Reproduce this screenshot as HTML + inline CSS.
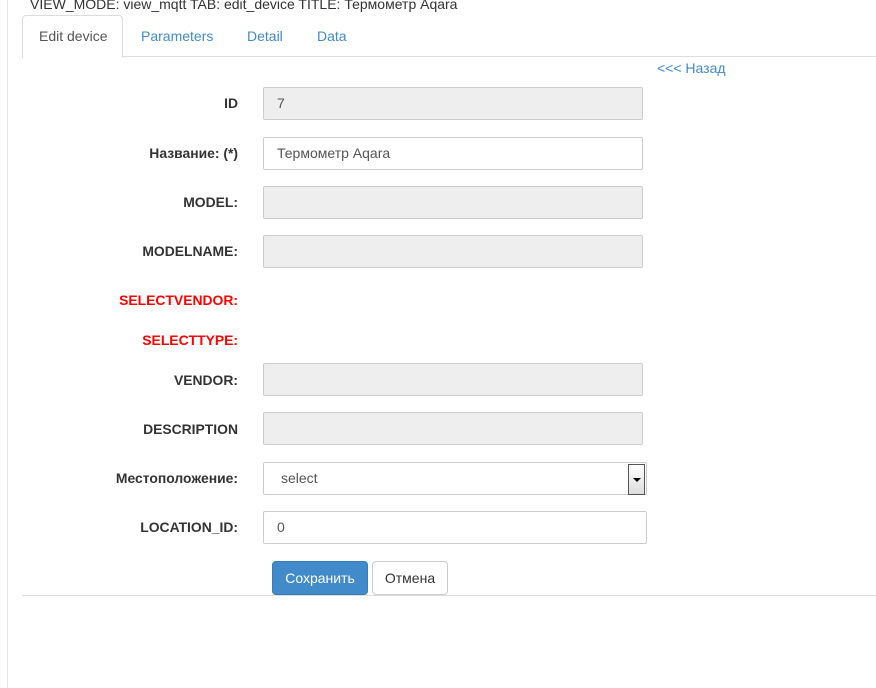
<!DOCTYPE html><html><head><meta charset="utf-8"><style>
body{margin:0;width:876px;height:688px;background:#fff;font-family:"Liberation Sans",sans-serif;font-size:14px;color:#333;position:relative;overflow:hidden}
.a{position:absolute}
.vl{left:7px;top:0;width:1px;height:688px;background:#e5e5e5}
.lab{right:638px;font-weight:bold;font-size:13.9px;text-align:right;white-space:nowrap}
.inp{left:263px;width:378px;height:31px;border:1px solid #ccc;border-radius:2px;background:#eee;box-sizing:content-box}
.inp span{position:absolute;left:13px;top:7px;font-size:14px;color:#555}
</style></head><body>
<div class="a vl"></div>
<div class="a" style="left:30px;top:-4px;font-size:14px;color:#333">VIEW_MODE: view_mqtt TAB: edit_device TITLE: Термометр Aqara</div>
<div class="a" style="left:22px;top:56px;width:854px;height:1px;background:#ddd"></div>
<div class="a" style="left:22px;top:15px;width:99px;height:42px;border:1px solid #ddd;border-bottom:none;border-radius:4px 4px 0 0;background:#fff"></div>
<div class="a" style="left:39px;top:28px;color:#555">Edit device</div>
<div class="a" style="left:141px;top:28px;color:#428bca">Parameters</div>
<div class="a" style="left:247px;top:28px;color:#428bca">Detail</div>
<div class="a" style="left:317px;top:28px;color:#428bca">Data</div>
<div class="a" style="left:657px;top:60px;color:#428bca;font-size:14px">&lt;&lt;&lt; Назад</div>

<div class="a lab" style="top:95px">ID</div>
<div class="a inp" style="top:87px"><span>7</span></div>
<div class="a lab" style="top:145px">Название: (*)</div>
<div class="a inp" style="top:137px;background:#fff"><span>Термометр Aqara</span></div>
<div class="a lab" style="top:194px">MODEL:</div>
<div class="a inp" style="top:186px"></div>
<div class="a lab" style="top:243px">MODELNAME:</div>
<div class="a inp" style="top:235px"></div>
<div class="a lab" style="top:292px;color:#f00">SELECTVENDOR:</div>
<div class="a lab" style="top:332px;color:#f00">SELECTTYPE:</div>
<div class="a lab" style="top:372px">VENDOR:</div>
<div class="a inp" style="top:363px"></div>
<div class="a lab" style="top:421px">DESCRIPTION</div>
<div class="a inp" style="top:412px"></div>
<div class="a lab" style="top:470px">Местоположение:</div>
<div class="a inp" style="top:462px;width:382px;background:#fff"><span style="left:17px">select</span>
<div class="a" style="right:1px;top:1px;width:17px;height:31px;border:1px solid #555;background:linear-gradient(#fff,#ddd);box-sizing:border-box"><div class="a" style="left:4px;top:13px;border-left:4px solid transparent;border-right:4px solid transparent;border-top:4px solid #000"></div></div></div>
<div class="a lab" style="top:519px">LOCATION_ID:</div>
<div class="a inp" style="top:511px;width:382px;background:#fff"><span>0</span></div>

<div class="a" style="left:272px;top:561px;width:96px;height:34px;background:#428bca;border:1px solid #357ebd;border-radius:4px;box-sizing:border-box;color:#fff;text-align:center;line-height:32px">Сохранить</div>
<div class="a" style="left:372px;top:561px;width:76px;height:34px;background:#fff;border:1px solid #ccc;border-radius:4px;box-sizing:border-box;color:#333;text-align:center;line-height:32px">Отмена</div>
<div class="a" style="left:22px;top:595px;width:854px;height:1px;background:#ddd"></div>
</body></html>
